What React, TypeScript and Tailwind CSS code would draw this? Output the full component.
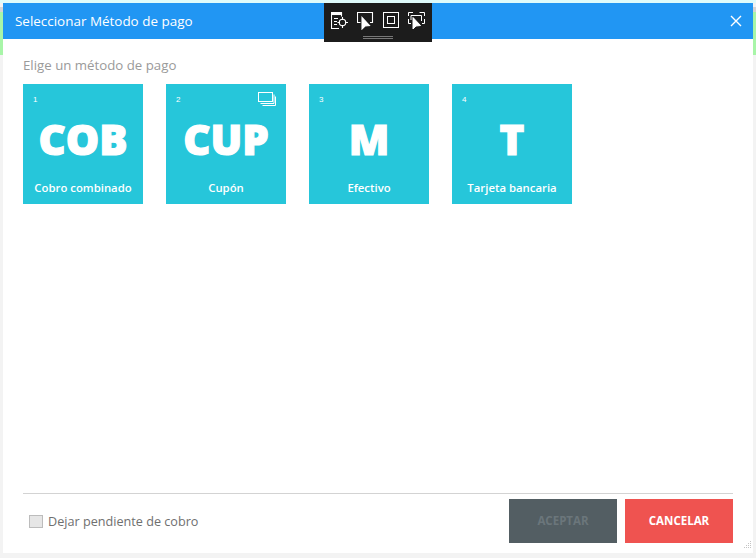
import React from "react";

const tiles = [
  { n: "1", code: "COB", label: "Cobro combinado", multi: false },
  { n: "2", code: "CUP", label: "Cupón", multi: true },
  { n: "3", code: "M", label: "Efectivo", multi: false },
  { n: "4", code: "T", label: "Tarjeta bancaria", multi: false },
];

const Multi = () => (
  <svg className="absolute right-[10px] top-[8px]" width="18" height="14" viewBox="0 0 18 14" fill="none" stroke="#fff" strokeWidth="1">
    <rect x="0.5" y="0.5" width="14" height="9" />
    <path d="M16 2.5V11.5H2.5M17.5 4.5V13.5H4.5" />
  </svg>
);

function Side() {
  return (
    <div className="flex w-[3px] flex-col bg-[#f3f3f3]">
      <div className="mt-[4px] h-[5px] bg-[#d4d4d4]" />
      <div className="h-[43px] bg-[#a8f5a8]" />
    </div>
  );
}

function Toolbar() {
  return (
    <div className="absolute left-[324px] top-[3px] flex h-[39px] w-[108px] flex-col items-center bg-[#1c1c1c]">
      <div className="mt-[9px] flex h-[17px] w-[95px] items-start justify-between text-white">
        <svg width="17" height="17" viewBox="0 0 17 17" fill="none" stroke="#fff" strokeWidth="1.1">
          <path d="M0.5 1V16.5H8M10.5 1V4.5" />
          <rect x="0.5" y="0.5" width="10" height="2" fill="#fff" />
          <path d="M3 6.5H7M3 9.5H6M3 12.5H6" />
          <circle cx="11.5" cy="10.5" r="3.2" />
          <path d="M11.5 5V8M11.5 13V16M6.5 10.5H9M14 10.5H17" />
        </svg>
        <svg width="17" height="18" viewBox="0 0 17 18" fill="none" stroke="#fff" strokeWidth="1.1">
          <path d="M3.5 10.5H0.5V0.5H15.5V10.5H13" />
          <path d="M5 5.5V17L8 14L12.5 13.5Z" fill="#fff" />
        </svg>
        <svg width="16" height="16" viewBox="0 0 16 16" fill="none" stroke="#fff" strokeWidth="1">
          <rect x="0.5" y="0.5" width="15" height="15" />
          <rect x="4.5" y="4.5" width="7" height="7" />
        </svg>
        <svg width="17" height="17" viewBox="0 0 17 17" fill="none" stroke="#fff" strokeWidth="1">
          <path d="M5 .5H.5V4M11.5 .5H16.5V4M.5 7V11.5H3M16.5 7V11.5H14M3 3.5H13.5V9M3 3.5V8" />
          <path d="M5 5.5V17L8 14L12.5 13.5Z" fill="#fff" />
        </svg>
      </div>
      <div className="mt-[7px] h-[3px] w-[30px] border-y border-[#777]" />
    </div>
  );
}

export default function App() {
  return (
    <div className="relative h-[558px] w-[756px] overflow-hidden bg-[#f3f3f3] font-['Open_Sans',sans-serif]">
      <div className="h-[3px] bg-[#dffbfb]" />
      <div className="flex h-[550px]">
        <Side />
        <div className="flex w-[750px] flex-col bg-white">
          <header className="flex h-[36px] shrink-0 items-center justify-between bg-[#2196f3] pl-[12px] pr-[11px] text-white">
            <span className="text-[13.45px]">Seleccionar Método de pago</span>
            <svg width="12" height="12" viewBox="0 0 12 12" stroke="#fff" strokeWidth="1.4" fill="none">
              <path d="M1 1L11 11M11 1L1 11" />
            </svg>
          </header>
          <main className="flex flex-1 flex-col px-[20px]">
            <p className="mt-[18px] h-[17px] text-[13.25px] leading-[17px] text-[#9a9a9a]">Elige un método de pago</p>
            <div className="mt-[10px] flex gap-[23px]">
              {tiles.map((t) => (
                <div key={t.n} className="relative flex h-[120px] w-[120px] flex-col items-center bg-[#26c6da] text-white">
                  <span className="absolute left-[10px] top-[11px] font-['Liberation_Sans',sans-serif] text-[8px] leading-[10px]">{t.n}</span>
                  {t.multi && <Multi />}
                  <span className="mt-[28px] h-[54px] text-[42px] font-extrabold leading-[54px] [-webkit-text-stroke:1.2px_white]">{t.code}</span>
                  <span className="mt-[14px] text-[11.35px] font-semibold leading-[15px]">{t.label}</span>
                </div>
              ))}
            </div>
            <div className="mt-auto flex h-[60px] items-end justify-between border-t border-[#d3d3d3] pb-[10px]">
              <label className="mb-[14px] ml-[6px] flex items-center gap-[5px] text-[12.65px] leading-[16px] text-[#6f6f6f]">
                <span className="h-[13px] w-[14px] border border-[#bcbcbc] bg-[#e6e6e6]" />
                Dejar pendiente de cobro
              </label>
              <div className="flex gap-[8px]">
                <button className="h-[44px] w-[108px] bg-[#535e63] text-[11.5px] font-bold text-[#6b767b]">ACEPTAR</button>
                <button className="h-[44px] w-[108px] bg-[#ef5350] text-[11.5px] font-bold text-white">CANCELAR</button>
              </div>
            </div>
          </main>
        </div>
        <Side />
      </div>
      <Toolbar />
      <svg className="absolute left-[741px] top-[540px]" width="12" height="12" viewBox="0 0 12 12" fill="#c4c4c4">
        <rect x="9" y="1" width="1" height="1" />
        <rect x="7" y="3" width="1" height="1" /><rect x="9" y="3" width="1" height="1" />
        <rect x="5" y="5" width="1" height="1" /><rect x="7" y="5" width="1" height="1" /><rect x="9" y="5" width="1" height="1" />
        <rect x="3" y="7" width="1" height="1" /><rect x="5" y="7" width="1" height="1" /><rect x="7" y="7" width="1" height="1" /><rect x="9" y="7" width="1" height="1" />
      </svg>
    </div>
  );
}
